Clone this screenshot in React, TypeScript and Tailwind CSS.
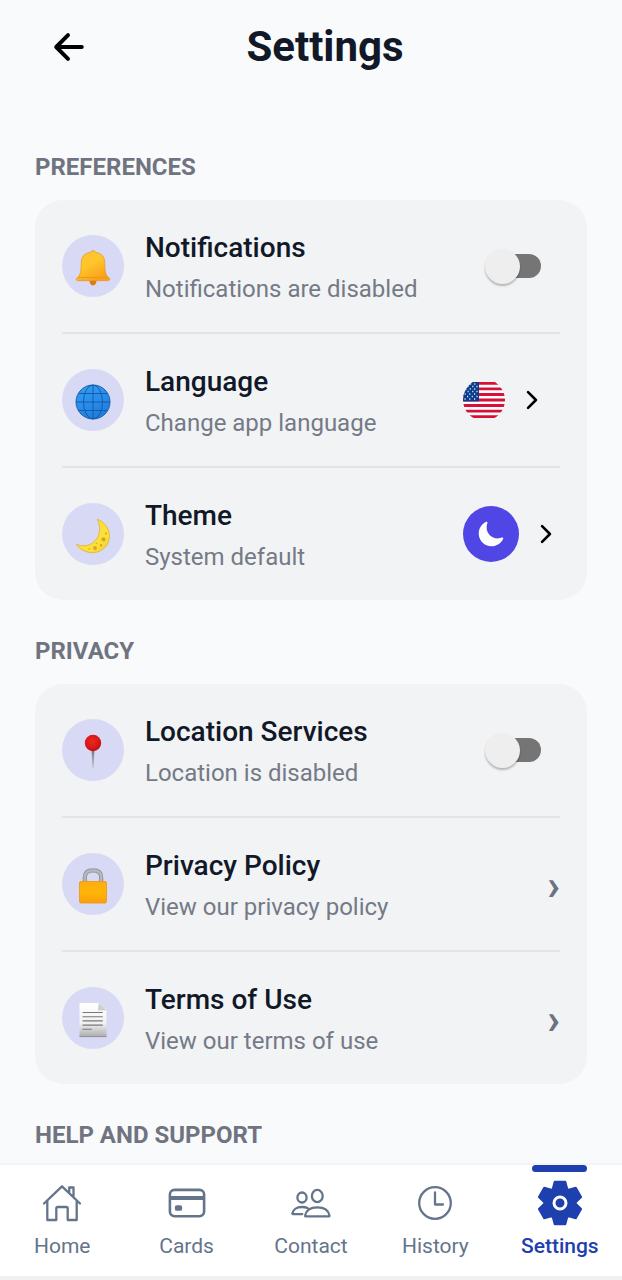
import type { ReactNode } from "react";
import { IoArrowBack, IoChevronForward, IoMoon } from "react-icons/io5";

function BellIcon() {
  return (
    <svg viewBox="0 0 36 36" className="size-9" aria-hidden="true">
      <defs>
        <linearGradient id="bell" x1="0" y1="0" x2="0.6" y2="1">
          <stop offset="0" stopColor="#fdc32f" />
          <stop offset="0.5" stopColor="#fec62b" />
          <stop offset="1" stopColor="#f9a01b" />
        </linearGradient>
      </defs>
      <path d="M14.5 30.500h7c0 2.800-1.300 4.900-3.500 4.900s-3.500-2.100-3.500-4.900z" fill="#db7c12" />
      <path d="M18 .8c1.500 0 2.400.7 2.600 1.600 6 .7 9.200 4.300 9.200 10.800 0 6.800.4 10.400 3 13.800.9.600 2 .9 2 2 0 1.200-.9 1.700-2.100 1.700H3.300c-1.200 0-2.100-.5-2.100-1.700 0-1.100 1.100-1.400 2-2 2.600-3.400 3-7 3-13.800 0-6.500 3.200-10.100 9.200-10.800C15.600 1.500 16.500.8 18 .8z" fill="url(#bell)" stroke="#e59518" strokeWidth=".7" />
      <path d="M3.200 27.500h29.600" stroke="#e99a16" strokeWidth=".9" />
    </svg>
  );
}

function GlobeIcon() {
  return (
    <svg viewBox="0 0 36 36" className="size-9" aria-hidden="true">
      <defs>
        <linearGradient id="globe" x1="0" y1="0" x2="0.5" y2="1">
          <stop offset="0" stopColor="#35a0f7" />
          <stop offset="1" stopColor="#1f7ee0" />
        </linearGradient>
      </defs>
      <circle cx="18" cy="18" r="17" fill="url(#globe)" />
      <g fill="none" stroke="#12589f" strokeWidth=".9">
        <circle cx="18" cy="18" r="17" />
        <ellipse cx="18" cy="18" rx="9.500" ry="17" />
        <path d="M18 1v34M1 18h34M4 9.500h28M4 26.500h28" />
      </g>
    </svg>
  );
}

function CrescentIcon() {
  return (
    <svg viewBox="0 0 36 36" className="size-9" aria-hidden="true">
      <defs>
        <linearGradient id="crescent" x1="0" y1="0" x2="1" y2="1">
          <stop offset="0" stopColor="#fdd835" />
          <stop offset="0.7" stopColor="#fbe13c" />
          <stop offset="1" stopColor="#efc92f" />
        </linearGradient>
      </defs>
      <path d="M22.300 1.300C31.500 4.800 36.300 13.800 33.800 22.600 31 32.600 20 37.200 10.200 33.300 5.600 31.500 2.600 28.500 1.300 26.200c5 2.300 12.200 2.500 17.600-2.300 6.400-5.700 7.300-14.200 3.400-22.600z" fill="url(#crescent)" stroke="#dfb32b" strokeWidth=".8" />
      <g fill="#d8a51f">
        <circle cx="28.500" cy="21.300" r="2.100" />
        <circle cx="20" cy="30" r="1.900" />
        <circle cx="26" cy="27.200" r="1.200" />
        <circle cx="31" cy="15.500" r="1.100" />
        <circle cx="21.500" cy="25.500" r=".8" />
        <circle cx="14" cy="31" r=".8" />
      </g>
    </svg>
  );
}

function PinIcon() {
  return (
    <svg viewBox="0 0 36 36" className="size-9" aria-hidden="true">
      <defs>
        <linearGradient id="needle" x1="0" y1="0" x2="0" y2="1">
          <stop offset="0" stopColor="#70757c" />
          <stop offset="1" stopColor="#c3c5cf" />
        </linearGradient>
        <radialGradient id="pinhead" cx=".45" cy=".4" r=".6">
          <stop offset="0" stopColor="#e52b1f" />
          <stop offset=".65" stopColor="#dc1717" />
          <stop offset="1" stopColor="#b90f14" />
        </radialGradient>
      </defs>
      <path d="M16.500 15h3L18.500 34.500h-1z" fill="url(#needle)" />
      <circle cx="18" cy="9" r="8.200" fill="url(#pinhead)" />
    </svg>
  );
}

function LockIcon() {
  return (
    <svg viewBox="0 0 36 36" className="size-9" aria-hidden="true">
      <defs>
        <linearGradient id="lock" x1="0" y1="0" x2="0" y2="1">
          <stop offset="0" stopColor="#ffad13" />
          <stop offset=".5" stopColor="#ffb508" />
          <stop offset="1" stopColor="#fb9d0c" />
        </linearGradient>
      </defs>
      <path d="M9.800 15V9.500C9.800 5 12.500 2.400 18 2.400S26.200 5 26.200 9.500V15" fill="none" stroke="#929699" strokeWidth="4.200" />
      <path d="M9.800 15V9.500C9.800 5 12.500 2.400 18 2.400S26.200 5 26.200 9.500V15" fill="none" stroke="#b7babd" strokeWidth="2.200" />
      <rect x="4.500" y="13.500" width="27" height="21.500" rx="1.500" fill="url(#lock)" stroke="#ed940f" strokeWidth=".8" />
    </svg>
  );
}

function PageIcon() {
  return (
    <svg viewBox="0 0 36 36" className="size-9" aria-hidden="true">
      <defs>
        <linearGradient id="page" x1="0" y1="0" x2="0" y2="1">
          <stop offset="0" stopColor="#ffffff" />
          <stop offset=".6" stopColor="#f1f1f1" />
          <stop offset="1" stopColor="#ababab" />
        </linearGradient>
      </defs>
      <path d="M4.500 1h19.200l7.800 7.200V35h-27z" fill="url(#page)" />
      <path d="M23.700 1l-.8 7.500 8.600-.3z" fill="#cfcfd2" />
      <path d="M4.500 34.600h27" stroke="#8d8d8d" strokeWidth=".9" />
      <path d="M7.500 10.500h20.300M7.500 14.700h20.300M7.500 18.900h20.300M7.500 23.100h20.300M7.500 27.300h9.300" stroke="#77797b" strokeWidth="1.100" />
    </svg>
  );
}

function UsFlag() {
  return (
    <svg viewBox="0 0 42 42" className="size-[42px]" role="img" aria-label="United States">
      <defs>
        <clipPath id="flagClip">
          <circle cx="21" cy="21" r="21" />
        </clipPath>
      </defs>
      <g clipPath="url(#flagClip)">
        <rect y="3" width="42" height="36" fill="#fff" />
        <path d="M0 4.400h42M0 9.900h42M0 15.500h42M0 21h42M0 26.500h42M0 32.100h42M0 37.600h42" stroke="#d80f36" strokeWidth="2.770" />
        <rect y="3" width="16" height="19.400" fill="#0b3c8c" />
        <path d="M7 5h1.200m3 0h1.200M4.500 7.500h1.200m3.500 0h1.200m3 0h1.200M2.500 10h1.200m3 0h1.200m3.200 0h1.200M4.500 12.500h1.200m3.500 0h1.200m3 0h1.200M1.500 15h1.200m3.500 0h1.200m3.600 0h1.200M4 17.500h1.200m3.500 0h1.200m3.500 0h1.200M1.500 20h1.200m3.500 0h1.200m3.600 0h1.200" stroke="#dce5f4" strokeWidth="1.400" />
      </g>
    </svg>
  );
}

function HomeIcon() {
  return (
    <svg viewBox="0 0 42 42" className="size-[42px]" fill="none" stroke="currentColor" strokeWidth="2.300" strokeLinecap="round" strokeLinejoin="round" aria-hidden="true">
      <path d="M3 21.500 21 4.300l18 17.200M6.300 19v19h9V26.500a1.500 1.500 0 0 1 1.500-1.500h8.400a1.500 1.500 0 0 1 1.500 1.500V38h9V19M28.200 10.500V5.500h4.300v9.200" />
    </svg>
  );
}

function CardsIcon() {
  return (
    <svg viewBox="0 0 42 42" className="size-[42px]" fill="none" stroke="currentColor" aria-hidden="true">
      <rect x="3.900" y="7.900" width="34.200" height="26.300" rx="4.600" strokeWidth="2.600" />
      <path d="M4 15.900h34" strokeWidth="4" />
      <path d="M10.800 25.300h3.400v1.600h-3.400z" strokeWidth="3.900" strokeLinejoin="round" />
    </svg>
  );
}

function ContactIcon() {
  return (
    <svg viewBox="0 0 42 42" className="size-[42px]" fill="none" stroke="currentColor" strokeWidth="2.300" strokeLinecap="round" strokeLinejoin="round" aria-hidden="true">
      <ellipse cx="12" cy="15.500" rx="4.600" ry="5" />
      <ellipse cx="27.300" cy="14" rx="5.400" ry="6.100" />
      <path d="M15.600 34.300c-.4 0-.6-.4-.5-.8 1-5.200 5.600-8.200 12.200-8.200s11.200 3 12.200 8.200c.1.400-.1.800-.5.800zM17.500 26c-1.600-.7-3.500-1-5.500-1-5.600 0-9.100 2.800-9.600 6.300-.1.500.1.800.6.800h9.300" />
    </svg>
  );
}

function HistoryIcon() {
  return (
    <svg viewBox="0 0 42 42" className="size-[42px]" fill="none" stroke="currentColor" strokeWidth="2.300" strokeLinecap="round" strokeLinejoin="round" aria-hidden="true">
      <circle cx="21" cy="21" r="15.800" />
      <path d="M21 10.500v12h8" />
    </svg>
  );
}

function GearIcon() {
  return (
    <svg viewBox="-23 -23 46 46" className="-m-0.5 size-[46px]" fill="currentColor" stroke="currentColor" strokeWidth="2" strokeLinejoin="round" aria-hidden="true">
      <circle r="15.800" />
      {[0, 60, 120, 180, 240, 300].map((angle) => (
        <path key={angle} d="M-7-15-5.300-21.300H5.300L7-15z" transform={`rotate(${angle})`} />
      ))}
      <circle r="6" fill="currentColor" stroke="#fff" strokeWidth="3" />
    </svg>
  );
}

function Toggle({ label }: { label: string }) {
  return (
    <label className="relative flex h-9 w-14 items-center">
      <input type="checkbox" role="switch" aria-label={label} className="peer sr-only" />
      <span className="ml-2 h-6 w-12 rounded-full bg-[#757575] peer-checked:bg-[#1e40af]" />
      <span className="absolute left-0 size-[35px] rounded-full bg-[#eeeeee] shadow-[0_2px_2px_rgba(0,0,0,0.25)] peer-checked:left-5" />
    </label>
  );
}

function Section({ title, children }: { title: string; children?: ReactNode }) {
  return (
    <section>
      <h2 className="text-2xl leading-8 font-bold text-[#6f7480]">{title}</h2>
      {children && (
        <div className="mt-[17px] mb-[35px] divide-y-2 divide-[#e2e4e7] rounded-[28px] bg-[#f2f3f5] px-[27px]">
          {children}
        </div>
      )}
    </section>
  );
}

function Row({ icon, title, detail, children }: { icon: ReactNode; title: string; detail: string; children: ReactNode }) {
  return (
    <div className="flex h-[134px] items-center gap-[21px] last:h-[132px]">
      <div className="flex size-[62px] shrink-0 items-center justify-center rounded-full bg-[#d8d9f5] pt-[3px]">{icon}</div>
      <div className="min-w-0 flex-1 pt-1">
        <h3 className="text-[28px] leading-[42px] font-medium text-[#111827]">{title}</h3>
        <p className="text-2xl leading-10 text-[#747a86]">{detail}</p>
      </div>
      {children}
    </div>
  );
}

function TextChevron({ label }: { label: string }) {
  return (
    <a href="#" aria-label={label} className="pt-1 text-[42px] leading-10 font-bold text-[#6b7280]">
      ›
    </a>
  );
}

const tabs = [
  { label: "Home", icon: <HomeIcon /> },
  { label: "Cards", icon: <CardsIcon /> },
  { label: "Contact", icon: <ContactIcon /> },
  { label: "History", icon: <HistoryIcon /> },
];

export default function App() {
  return (
    <div className="flex h-screen flex-col bg-[#f9fafc] font-[Roboto,sans-serif]">
      <header className="flex h-[94px] shrink-0 items-center justify-between pr-5 pl-12">
        <button type="button" aria-label="Back" className="text-black">
          <IoArrowBack className="size-[42px]" />
        </button>
        <h1 className="text-[42px] leading-[50px] font-bold text-[#111827]">Settings</h1>
        <span className="w-[42px]" />
      </header>

      <main className="min-h-0 flex-1 overflow-hidden px-[35px] pt-[57px]">
        <Section title="PREFERENCES">
          <Row icon={<BellIcon />} title="Notifications" detail="Notifications are disabled">
            <div className="w-[97px] pl-[22px]">
              <Toggle label="Notifications" />
            </div>
          </Row>
          <Row icon={<GlobeIcon />} title="Language" detail="Change app language">
            <button type="button" aria-label="Change language" className="flex w-[97px] items-center gap-[13px] text-black">
              <UsFlag />
              <IoChevronForward className="size-7" />
            </button>
          </Row>
          <Row icon={<CrescentIcon />} title="Theme" detail="System default">
            <button type="button" aria-label="Change theme" className="flex w-[97px] items-center gap-[13px] text-black">
              <span className="flex size-14 items-center justify-center rounded-full bg-[#5046e5] text-white">
                <IoMoon className="size-7" />
              </span>
              <IoChevronForward className="size-7" />
            </button>
          </Row>
        </Section>

        <Section title="PRIVACY">
          <Row icon={<PinIcon />} title="Location Services" detail="Location is disabled">
            <div className="w-[97px] pl-[22px]">
              <Toggle label="Location Services" />
            </div>
          </Row>
          <Row icon={<LockIcon />} title="Privacy Policy" detail="View our privacy policy">
            <TextChevron label="Open privacy policy" />
          </Row>
          <Row icon={<PageIcon />} title="Terms of Use" detail="View our terms of use">
            <TextChevron label="Open terms of use" />
          </Row>
        </Section>

        <Section title="HELP AND SUPPORT" />
      </main>

      <nav className="grid shrink-0 grid-cols-5 border-t-2 border-b-4 border-t-[#f3f4f6] border-b-[#f0f0f0] bg-white text-[21px] leading-7">
        {tabs.map((tab) => (
          <a key={tab.label} href="#" className="flex flex-col items-center gap-2 pt-[17px] pb-4 text-[#64748b]">
            {tab.icon}
            {tab.label}
          </a>
        ))}
        <a href="#" aria-current="page" className="relative flex flex-col items-center gap-2 pt-[17px] pb-4 font-medium text-[#1e40af]">
          <span className="absolute top-0 h-[7px] w-[55px] rounded-full bg-[#1e40af]" />
          <GearIcon />
          Settings
        </a>
      </nav>
    </div>
  );
}
